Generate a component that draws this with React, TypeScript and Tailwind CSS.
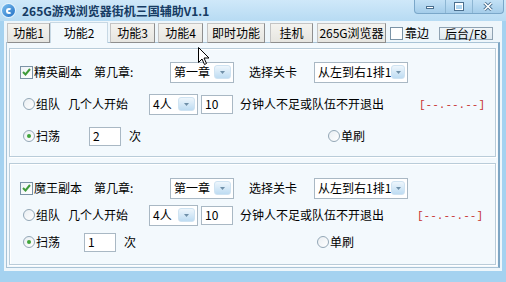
import React from "react";

const font = "font-['Noto_Sans_CJK_SC','Noto_Sans',sans-serif]";

function Combo({ w, text }: { w: string; text: string }) {
  return (
    <div className={`${w} h-[21px] shrink-0 border border-[#a9b8c4] bg-white flex items-center`}>
      <span className="pl-[3px] flex-1 whitespace-nowrap leading-none">{text}</span>
      <div className="w-[17px] h-[14px] mr-[2px] rounded-[3px] bg-gradient-to-b from-[#eef6fc] to-[#bedcf2] border border-[#cfe3f2] flex items-center justify-center">
        <svg width="5" height="3" viewBox="0 0 5 3">
          <path d="M0 0 L5 0 L2.5 3 Z" fill="#6f8fa8" />
        </svg>
      </div>
    </div>
  );
}

function Input({ w, text }: { w: string; text: string }) {
  return (
    <div className={`${w} h-[19px] shrink-0 border border-[#a9b8c4] bg-white flex items-center pl-[3px] leading-none`}>
      {text}
    </div>
  );
}

function Check() {
  return (
    <div className="w-[13px] h-[13px] shrink-0 border border-[#7b93a6] bg-gradient-to-br from-[#eef3f6] to-white flex items-center justify-center">
      <svg width="9" height="8" viewBox="0 0 9 8">
        <path d="M1 4 L3.5 6.5 L8 1" stroke="#3f9b3a" strokeWidth="2" fill="none" />
      </svg>
    </div>
  );
}

function Radio({ on }: { on?: boolean }) {
  return (
    <div className="w-[12px] h-[12px] shrink-0 rounded-full border border-[#93a7b6] bg-gradient-to-br from-[#e9eef2] to-white flex items-center justify-center">
      {on && <div className="w-[4px] h-[4px] rounded-full bg-[#3fa53a]" />}
    </div>
  );
}

function Group({
  name,
  top,
  rowGap,
  h,
  inputLeft,
  inputVal,
  redW,
  soloW,
}: {
  name: string;
  top: string;
  rowGap: string;
  h: string;
  inputLeft: string;
  inputVal: string;
  redW: string;
  soloW: string;
}) {
  return (
    <div className={`${h} shrink-0 mx-[2px] border border-[#b9ccd9] shadow-[inset_1px_1px_0_#ffffff,1px_1px_0_#ffffff] flex flex-col ${top} ${rowGap} pl-[10px]`}>
      <div className="h-[22px] flex items-center">
        <div className="w-[74px] flex items-center">
          <Check />
          <span className="ml-[1px]">{name}</span>
        </div>
        <div className="w-[76px]">第几章:</div>
        <Combo w="w-[64px]" text="第一章" />
        <div className="ml-[15px] w-[65px]">选择关卡</div>
        <Combo w="w-[94px]" text="从左到右1排1" />
      </div>
      <div className="h-[22px] flex items-center">
        <div className="w-[48px] flex items-center pl-[3px]">
          <Radio />
          <span className="ml-[1px]">组队</span>
        </div>
        <div className="w-[81px]">几个人开始</div>
        <Combo w="w-[49px]" text="4人" />
        <div className="ml-[3px]">
          <Input w="w-[32px]" text="10" />
        </div>
        <div className={`ml-[7px] ${redW}`}>分钟人不足或队伍不开退出</div>
        <div className="text-[#c83434] text-[11px] font-['Liberation_Mono',monospace] pt-[3px]">[--.--.--]</div>
      </div>
      <div className="h-[22px] flex items-center">
        <div className={`${inputLeft} flex items-center pl-[3px]`}>
          <Radio on />
          <span className="ml-[1px]">扫荡</span>
        </div>
        <Input w="w-[32px]" text={inputVal} />
        <div className={`ml-[8px] ${soloW}`}>次</div>
        <div className="flex items-center">
          <Radio />
          <span className="ml-[1px]">单刷</span>
        </div>
      </div>
    </div>
  );
}

function Tab({ w, label }: { w: string; label: string }) {
  return (
    <div className={`${w} h-[20px] shrink-0 border border-t-[#c4c4c4] border-l-[#c4c4c4] border-r-[#8e8e8e] border-b-[#8e8e8e] bg-gradient-to-b from-[#f4f3ef] to-[#e6e5e0] flex items-center justify-center leading-none`}>
      {label}
    </div>
  );
}

export default function App() {
  return (
    <div className={`w-[506px] h-[282px] relative overflow-hidden bg-[#a5d2f0] text-[12px] text-black ${font}`}>
      {/* title bar */}
      <div className="h-[21px] flex items-center bg-gradient-to-b from-[#cfe8f9] to-[#b7dbf3]">
        <div className="ml-[2px] w-[13px] h-[13px] rounded-full bg-gradient-to-br from-[#7cc0f0] to-[#1e6fc4] flex items-center justify-center shadow-[0_0_0_1px_#e6f3fc]">
          <div className="w-[6px] h-[6px] rounded-full border-[2px] border-white border-r-transparent" />
        </div>
        <div className="ml-[7px] text-[12px] font-bold text-[#163b63] leading-none">265G游戏浏览器街机三国辅助V1.1</div>
      </div>
      {/* window controls */}
      <div className="absolute top-0 left-[414px] w-[90px] h-[14px] flex rounded-b-[4px] border border-t-0 border-[#7aa7c9] bg-gradient-to-b from-[#c3e1f6] to-[#a4cdea] overflow-hidden">
        <div className="w-[31px] flex items-center justify-center border-r border-[#8db6d3]">
          <div className="w-[8px] h-[3px] bg-white border border-[#4b6f8e] mt-[2px]" />
        </div>
        <div className="w-[27px] flex items-center justify-center border-r border-[#8db6d3]">
          <div className="w-[10px] h-[9px] bg-transparent border border-[#4b6f8e] shadow-[inset_0_2px_0_#ffffff,inset_0_0_0_1px_#ffffff]" />
        </div>
        <div className="flex-1 flex items-center justify-center">
          <svg width="10" height="9" viewBox="0 0 10 9">
            <path d="M1.5 1 L8.5 8 M8.5 1 L1.5 8" stroke="#4b6f8e" strokeWidth="3.2" />
            <path d="M1.5 1 L8.5 8 M8.5 1 L1.5 8" stroke="#ffffff" strokeWidth="1.6" />
          </svg>
        </div>
      </div>
      {/* client area */}
      <div className="mx-[4px] h-[250px] bg-[#eef6fb] pt-[2px] px-[2px]">
        {/* tabs row */}
        <div className="h-[20px] flex items-start relative z-10">
          <div className="ml-[1px]" />
          <Tab w="w-[43px]" label="功能1" />
          <div className="w-[58px] h-[21px] -mt-[1px] flex items-center justify-center leading-none bg-[#f3f9fd] border border-b-0 border-[#c7d8e4]">功能2</div>
          <div className="w-[2px]" />
          <Tab w="w-[45px]" label="功能3" />
          <div className="w-[3px]" />
          <Tab w="w-[45px]" label="功能4" />
          <div className="w-[4px]" />
          <Tab w="w-[58px]" label="即时功能" />
          <div className="w-[5px]" />
          <Tab w="w-[43px]" label="挂机" />
          <div className="w-[4px]" />
          <Tab w="w-[69px]" label="265G浏览器" />
          <div className="ml-[4px] h-[20px] flex items-center">
            <div className="w-[13px] h-[13px] border border-[#7b93a6] bg-white" />
            <span className="ml-[2px] leading-none">靠边</span>
          </div>
          <div className="ml-[10px] mt-[4px] w-[54px] h-[13px] border border-[#8fa2b2] bg-gradient-to-b from-[#f1f6f9] to-[#dfe9f0] flex items-center justify-center leading-none text-[12px]">后台/F8</div>
        </div>
        {/* panel */}
        <div className="-mt-[1px] h-[226px] bg-[#f3f9fd] border border-[#a9c3d6] border-r-[#7ea6c4] border-r-2 pt-[5px] flex flex-col">
          <Group name="精英副本" top="pt-[12px]" rowGap="gap-[10px]" h="h-[109px]" inputLeft="w-[69px]" inputVal="2" redW="w-[179px]" soloW="w-[199px]" />
          <div className="h-[6px] shrink-0" />
          <Group name="魔王副本" top="pt-[13px]" rowGap="gap-[5px]" h="h-[102px]" inputLeft="w-[64px]" inputVal="1" redW="w-[177px]" soloW="w-[193px]" />
        </div>
      </div>
      {/* mouse cursor */}
      <svg className="absolute left-[198px] top-[47px] z-20" width="12" height="19" viewBox="0 0 12 19">
        <path d="M0.5 0.5 L0.5 15.5 L4 12 L6.5 17.5 L8.5 16.5 L6 11 L11 11 Z" fill="#ffffff" stroke="#000000" strokeWidth="1" />
      </svg>
    </div>
  );
}
